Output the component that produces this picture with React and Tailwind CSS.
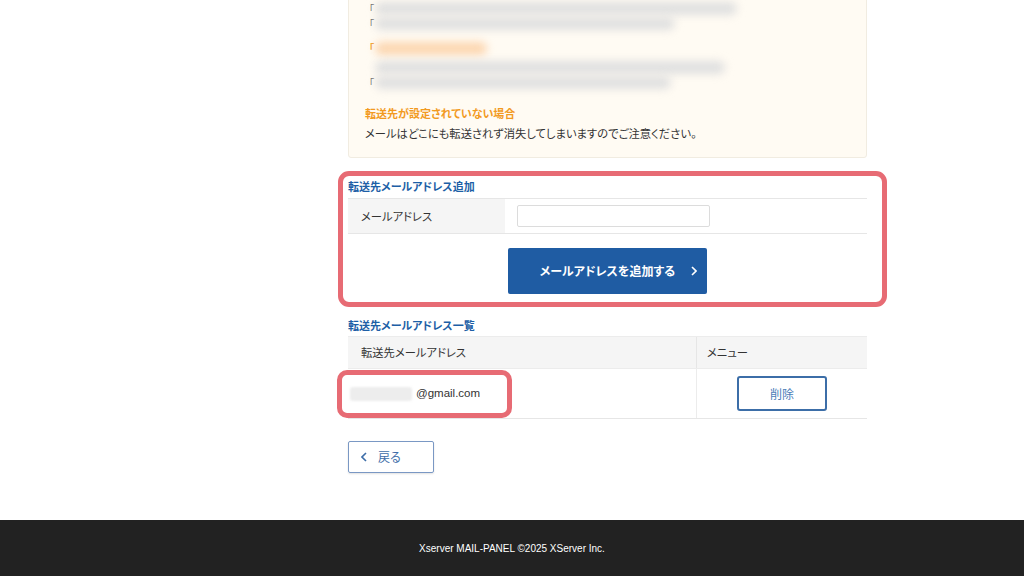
import React from "react";

const JP = { fontFamily: '"Noto Sans CJK JP", "Noto Sans", sans-serif', fontFeatureSettings: '"palt"' };

function BlurLine({ w, orange, bracket = true }) {
  return (
    <div className="flex h-[15px] items-center pl-[4px]">
      <span className={`w-[6px] text-[10px] leading-none ${orange ? "text-[#f0a030]" : "text-[#666]"}`}>
        {bracket ? "「" : ""}
      </span>
      <div
        className={`h-[13px] rounded-full blur-[4px] ${orange ? "bg-[#fcd9b6]" : "bg-[#e0e0e0]"}`}
        style={{ width: w }}
      />
    </div>
  );
}

export default function App() {
  return (
    <div className="relative min-h-[576px] w-[1024px] overflow-hidden bg-white text-[#333]" style={JP}>
      <div className="ml-[348px] w-[519px]">
        {/* notice box */}
        <div className="mt-[-42px] rounded-[3px] border border-[#f1ece1] bg-[#fffbf3] px-[16px] pt-[16px] pb-[16px]">
          <div className="h-[16px]" />
          <div className="mt-[10px]">
            <BlurLine w={362} />
            <BlurLine w={300} />
          </div>
          <div className="mt-[9px] flex h-[16px] items-center pl-[4px]">
            <span className="w-[6px] text-[10px] font-bold leading-none text-[#f0a030]">「</span>
            <div className="h-[13px] w-[112px] rounded-full bg-[#fcd6b0] blur-[4px]" />
          </div>
          <div className="mt-[4px]">
            <BlurLine w={350} bracket={false} />
            <BlurLine w={296} />
          </div>
          <div className="mt-[15px] flex h-[16px] items-center text-[11px] font-bold text-[#f29a1f]">
            転送先が設定されていない場合
          </div>
          <div className="mt-[5px] flex h-[15px] items-center text-[11.3px] text-[#333]">
            メールはどこにも転送されず消失してしまいますのでご注意ください。
          </div>
        </div>

        {/* add section */}
        <div className="mt-[20px] flex h-[16px] items-center text-[11px] font-bold text-[#1d5fa6]">
          転送先メールアドレス追加
        </div>
        <div className="mt-[4px] flex h-[36px] border-y border-[#e6e6e6]">
          <div className="flex w-[157px] items-center bg-[#f5f5f5] pl-[13px] text-[11.3px] text-[#333]">
            メールアドレス
          </div>
          <div className="flex items-center pl-[12px]">
            <div className="h-[22px] w-[193px] rounded-[2px] border border-[#dcdcdc] bg-white" />
          </div>
        </div>
        <div className="mt-[14px] flex justify-center">
          <div className="relative flex h-[46px] w-[199px] items-center justify-center rounded-[2px] bg-[#1f5ca3] text-[12px] font-bold text-white">
            メールアドレスを追加する
            <svg className="absolute right-[10px] top-[18px]" width="6" height="10" viewBox="0 0 6 10">
              <path d="M1 1l4 4-4 4" stroke="white" strokeWidth="1.6" fill="none" />
            </svg>
          </div>
        </div>

        {/* list section */}
        <div className="mt-[23px] flex h-[16px] items-center text-[11px] font-bold text-[#1d5fa6]">
          転送先メールアドレス一覧
        </div>
        <div className="mt-[3px] flex h-[33px] border-y border-[#ececec] bg-[#f5f5f5] text-[11.3px] text-[#333]">
          <div className="flex w-[348px] items-center pl-[13px]">転送先メールアドレス</div>
          <div className="flex flex-1 items-center border-l border-[#e6e6e6] pl-[10px]">メニュー</div>
        </div>
        <div className="flex h-[50px] border-b border-[#e6e6e6]">
          <div className="flex w-[348px] items-center pl-[2px]">
            <div className="h-[14px] w-[62px] rounded-[3px] bg-[#ededed] blur-[1px]" />
            <span className="ml-[4px] text-[11.5px] text-[#333]" style={{ fontFamily: '"Liberation Sans", Arial, sans-serif' }}>
              @gmail.com
            </span>
          </div>
          <div className="flex flex-1 items-center justify-center border-l border-[#ececec]">
            <div className="flex h-[35px] w-[90px] items-center justify-center rounded-[3px] border-2 border-[#3c6ea8] text-[12px] text-[#4a7cb8]">
              削除
            </div>
          </div>
        </div>

        <div className="mt-[22px] flex h-[32px] w-[86px] items-center rounded-[2px] border border-[#7a98c4] pl-[12px] text-[12px] text-[#3d6da8] shadow-[0_1px_2px_rgba(0,0,0,0.12)]">
          <svg width="6" height="10" viewBox="0 0 6 10">
            <path d="M5 1L1 5l4 4" stroke="#3d6da8" strokeWidth="1.6" fill="none" />
          </svg>
          <span className="ml-[11px]">戻る</span>
        </div>
      </div>

      <div className="mt-[47px] flex h-[57px] items-center justify-center bg-[#222222] text-[10px] text-white" style={{ fontFamily: '"Liberation Sans", Arial, sans-serif' }}>
        Xserver MAIL-PANEL ©2025 XServer Inc.
      </div>

      {/* highlight overlays */}
      <div className="pointer-events-none absolute left-[338px] top-[171px] h-[136px] w-[549px] rounded-[11px] border-[5px] border-[#e76b74]" />
      <div className="pointer-events-none absolute left-[337px] top-[370px] h-[48px] w-[175px] rounded-[10px] border-[5px] border-[#e76b74]" />
    </div>
  );
}
